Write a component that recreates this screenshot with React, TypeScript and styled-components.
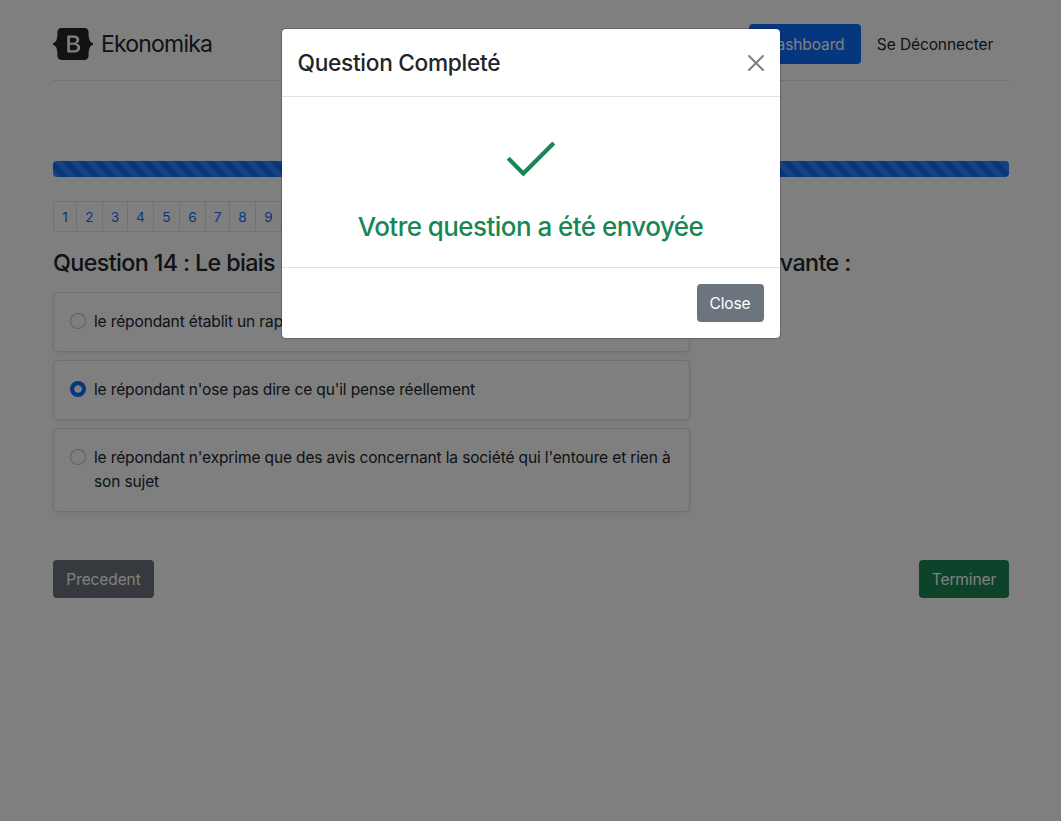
import React from 'react';
import styled, { createGlobalStyle } from 'styled-components';

const GlobalStyle = createGlobalStyle`
  *, *::before, *::after { box-sizing: border-box; }
  body {
    margin: 0;
    overflow: hidden;
    background: #fff;
    color: #212529;
    font-family: Inter, "Liberation Sans", sans-serif;
    font-size: 15.5px;
    line-height: 24px;
  }
  h1, h2, p { margin: 0; }
  button { font-family: inherit; }
`;

const Page = styled.div`
  min-height: 822px;
  padding: 24px 52px 0 53px;
`;

const Header = styled.header`
  display: flex;
  align-items: center;
  justify-content: space-between;
  height: 57px;
  padding-bottom: 16px;
  border-bottom: 1px solid #dee2e6;
`;

const Brand = styled.a`
  display: flex;
  align-items: center;
  gap: 8px;
  color: #212529;
  font-size: 23px;
  letter-spacing: -0.8px;
`;

const Nav = styled.nav`
  display: flex;
`;

const NavLink = styled.a<{ $active?: boolean; $width: number }>`
  width: ${(p) => p.$width}px;
  height: 40px;
  padding: 9px 0 7px;
  border-radius: 4px;
  text-align: center;
  white-space: nowrap;
  letter-spacing: -0.1px;
  color: ${(p) => (p.$active ? '#fff' : '#212529')};
  background: ${(p) => (p.$active ? '#0d6efd' : 'transparent')};
`;

const Progress = styled.div`
  height: 16px;
  margin-top: 80px;
  border-radius: 4px;
  background-color: #0d6efd;
  background-image: linear-gradient(
    45deg,
    rgba(255, 255, 255, 0.15) 25%,
    transparent 25%,
    transparent 50%,
    rgba(255, 255, 255, 0.15) 50%,
    rgba(255, 255, 255, 0.15) 75%,
    transparent 75%,
    transparent
  );
  background-size: 16px 16px;
`;

const Pagination = styled.div`
  display: flex;
  margin-top: 24px;
`;

const PageLink = styled.a<{ $width: number }>`
  width: ${(p) => p.$width}px;
  height: 31px;
  border: 1px solid #dee2e6;
  border-right-width: 0;
  color: #0d6efd;
  font-size: 13.6px;
  line-height: 30px;
  text-align: center;
  &:first-child { border-radius: 3px 0 0 3px; }
  &:last-child { border-right-width: 1px; border-radius: 0 3px 3px 0; }
`;

const QuestionTitle = styled.h1`
  margin-top: 17px;
  font-size: 23.3px;
  font-weight: 500;
  line-height: 28px;
  letter-spacing: -0.62px;
  white-space: nowrap;
`;

const Answers = styled.div`
  display: flex;
  flex-direction: column;
  gap: 8px;
  width: 637px;
  margin-top: 15px;
`;

const Answer = styled.label`
  display: flex;
  gap: 8px;
  padding: 17px 16px;
  border: 1px solid rgba(0, 0, 0, 0.125);
  border-radius: 4px;
  box-shadow: 0 2px 4px rgba(0, 0, 0, 0.075);
  letter-spacing: -0.13px;
`;

const Radio = styled.span<{ $checked?: boolean }>`
  flex: none;
  width: 16px;
  height: 16px;
  margin-top: 3px;
  border-radius: 50%;
  border: ${(p) => (p.$checked ? '4.5px solid #0d6efd' : '1px solid rgba(0, 0, 0, 0.25)')};
  background: ${(p) =>
    p.$checked ? 'radial-gradient(circle, #fff 3.5px, #0d6efd 4px) border-box' : '#fff'};
`;

const Actions = styled.div`
  display: flex;
  justify-content: space-between;
  margin-top: 48px;
`;

const Button = styled.button<{ $tone: string; $width: number }>`
  width: ${(p) => p.$width}px;
  height: 38px;
  padding: 2px 0 0;
  border: 0;
  border-radius: 4px;
  background: ${(p) => p.$tone};
  color: #fff;
  font-size: 15.5px;
  line-height: 24px;
  letter-spacing: -0.1px;
`;

const Backdrop = styled.div`
  position: absolute;
  inset: 0 0 auto 0;
  height: 821px;
  padding-top: 28px;
  background: rgba(0, 0, 0, 0.5);
`;

const Modal = styled.div`
  width: 500px;
  margin: 0 auto;
  border: 1px solid rgba(0, 0, 0, 0.2);
  border-radius: 5px;
  background: #fff;
  background-clip: padding-box;
`;

const ModalHeader = styled.div`
  display: flex;
  align-items: center;
  justify-content: space-between;
  height: 68px;
  padding: 0 16px;
  border-bottom: 1px solid #dee2e6;
`;

const ModalTitle = styled.h2`
  font-size: 22.7px;
  font-weight: 500;
  line-height: 34px;
  letter-spacing: -0.3px;
`;

const ModalBody = styled.div`
  display: flex;
  flex-direction: column;
  align-items: center;
  height: 170px;
  padding-top: 44px;
  color: #198754;
`;

const Message = styled.p`
  margin-top: 34px;
  font-size: 26px;
  font-weight: 500;
  line-height: 32px;
  letter-spacing: -0.55px;
  white-space: nowrap;
`;

const ModalFooter = styled.div`
  display: flex;
  justify-content: flex-end;
  padding: 16px;
  border-top: 1px solid #dee2e6;
`;

const Logo = () => (
  <svg width="40" height="32" viewBox="0 0 118 94" fill="currentColor">
    <path
      fillRule="evenodd"
      clipRule="evenodd"
      d="M24.509 0c-6.733 0-11.715 5.893-11.492 12.284.214 6.14-.064 14.092-2.066 20.577C8.943 39.365 5.547 43.485 0 44.014v5.972c5.547.529 8.943 4.649 10.951 11.153 2.002 6.485 2.28 14.437 2.066 20.577C12.794 88.106 17.776 94 24.51 94H93.5c6.733 0 11.714-5.893 11.491-12.284-.214-6.14.064-14.092 2.066-20.577 2.009-6.504 5.396-10.624 10.943-11.153v-5.972c-5.547-.529-8.934-4.649-10.943-11.153-2.002-6.484-2.28-14.437-2.066-20.577C105.214 5.894 100.233 0 93.5 0H24.508zM80 57.863C80 66.663 73.436 72 62.543 72H44a2 2 0 01-2-2V24a2 2 0 012-2h18.437c9.083 0 15.044 4.92 15.044 12.474 0 5.302-4.01 10.049-9.119 10.88v.277C75.317 46.394 80 51.21 80 57.863zM60.521 28.34H49.948v14.934h8.905c6.884 0 10.68-2.772 10.68-7.727 0-4.643-3.264-7.207-9.012-7.207zM49.948 49.2v16.458H60.91c7.167 0 10.964-2.876 10.964-8.281 0-5.406-3.903-8.178-11.425-8.178H49.948z"
    />
  </svg>
);

const CloseIcon = () => (
  <svg width="16" height="16" viewBox="0 0 16 16" fill="none" stroke="#000" strokeOpacity="0.5" strokeWidth="2" strokeLinecap="round">
    <path d="M1 1l14 14M15 1L1 15" />
  </svg>
);

const CheckIcon = () => (
  <svg width="50" height="36" viewBox="0 0 50 36" fill="none" stroke="currentColor" strokeWidth="4.2">
    <path d="M2.2 17.2L17.3 32.5L47.8 2" />
  </svg>
);

const pages = [23, 26, 25, 26, 26, 26, 24, 26, 26, 33, 31];
const answers = [
  { text: "le répondant établit un rapport de confiance avec l'enquêteur" },
  { text: "le répondant n'ose pas dire ce qu'il pense réellement", checked: true },
  { text: "le répondant n'exprime que des avis concernant la société qui l'entoure et rien à son sujet" },
];

export default function App() {
  return (
    <>
      <GlobalStyle />
      <Page>
        <Header>
          <Brand>
            <Logo />
            Ekonomika
          </Brand>
          <Nav>
            <NavLink $active $width={112}>Dashboard</NavLink>
            <NavLink $width={148}>Se Déconnecter</NavLink>
          </Nav>
        </Header>
        <Progress />
        <Pagination>
          {pages.map((width, i) => (
            <PageLink key={i} $width={width}>{i + 1}</PageLink>
          ))}
        </Pagination>
        <QuestionTitle>
          Question 14 : Le biais de désirabilité sociale se réfère à la situation suivante :
        </QuestionTitle>
        <Answers>
          {answers.map((a) => (
            <Answer key={a.text}>
              <Radio $checked={a.checked} />
              <span>{a.text}</span>
            </Answer>
          ))}
        </Answers>
        <Actions>
          <Button $tone="#6c757d" $width={101}>Precedent</Button>
          <Button $tone="#198754" $width={90}>Terminer</Button>
        </Actions>
      </Page>
      <Backdrop>
        <Modal>
          <ModalHeader>
            <ModalTitle>Question Completé</ModalTitle>
            <CloseIcon />
          </ModalHeader>
          <ModalBody>
            <CheckIcon />
            <Message>Votre question a été envoyée</Message>
          </ModalBody>
          <ModalFooter>
            <Button $tone="#6c757d" $width={67}>Close</Button>
          </ModalFooter>
        </Modal>
      </Backdrop>
    </>
  );
}
